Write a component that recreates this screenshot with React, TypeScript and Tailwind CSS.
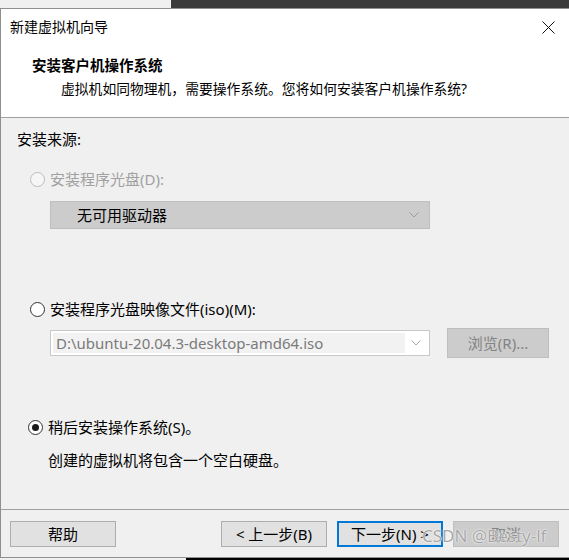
import React from 'react';

const font = "font-['Noto_Sans','Noto_Sans_CJK_SC',sans-serif]";

function Radio({ checked, disabled }: { checked?: boolean; disabled?: boolean }) {
  return (
    <span
      className={`flex h-[15px] w-[15px] shrink-0 items-center justify-center rounded-full border ${
        disabled ? 'border-[#bcbcbc] bg-[#f6f6f6]' : 'border-[#333333] bg-white'
      }`}
    >
      {checked && <span className="h-[7px] w-[7px] rounded-full bg-[#1a1a1a]" />}
    </span>
  );
}

function Chevron({ color = '#9a9a9a' }: { color?: string }) {
  return (
    <svg width="10" height="6" viewBox="0 0 10 6" fill="none">
      <path d="M0.5 0.5L5 5L9.5 0.5" stroke={color} strokeWidth="1" />
    </svg>
  );
}

function Button({
  children,
  focused,
  disabled,
  className = '',
}: {
  children: React.ReactNode;
  focused?: boolean;
  disabled?: boolean;
  className?: string;
}) {
  const look = focused
    ? 'border-2 border-[#0078d7] bg-[#e1e1e1] text-black'
    : disabled
    ? 'border border-[#bfbfbf] bg-[#cccccc] text-[#838383]'
    : 'border border-[#adadad] bg-[#e1e1e1] text-black';
  return (
    <div className={`flex h-[26px] items-center justify-center text-[15px] ${look} ${className}`}>
      {children}
    </div>
  );
}

export default function App() {
  return (
    <div className={`h-[560px] w-[569px] overflow-hidden bg-[#f0f0f0] ${font}`}>
      {/* window behind */}
      <div className="flex h-[8px]">
        <div className="w-[171px] bg-[#f0f0f0]" />
        <div className="flex-1 bg-[#3a3a3a]" />
      </div>

      <div className="border-l border-t border-[#8f8f8f]">
        {/* title bar */}
        <div className="flex h-[36px] items-center justify-between bg-white pl-[9px] pr-[14px]">
          <span className="text-[14px] leading-5 text-black">新建虚拟机向导</span>
          <svg width="13" height="13" viewBox="0 0 13 13">
            <path d="M0.5 0.5L12.5 12.5M12.5 0.5L0.5 12.5" stroke="#111" strokeWidth="1" />
          </svg>
        </div>

        {/* header */}
        <div className="h-[73px] border-b border-[#a0a0a0] bg-white pl-[31px] pt-[10px]">
          <div className="text-[14.5px] font-bold leading-5 text-black">安装客户机操作系统</div>
          <div className="mt-[4px] pl-[29px] text-[13.8px] leading-5 text-black">
            虚拟机如同物理机，需要操作系统。您将如何安装客户机操作系统?
          </div>
        </div>

        {/* body */}
        <div className="h-[392px] border-b border-[#a0a0a0] pl-[16px] pt-[11px] text-[15px] leading-5">
          <div className="text-black">安装来源:</div>

          <div className="mt-[20px] flex items-center gap-[5px] pl-[13px] text-[#a0a0a0]">
            <Radio disabled />
            <span>安装程序光盘(D):</span>
          </div>

          <div className="ml-[33px] mt-[12px] flex h-[28px] w-[380px] items-center justify-between border border-[#bfbfbf] bg-[#cccccc] pl-[26px] pr-[10px] text-black">
            <span>无可用驱动器</span>
            <Chevron color="#9a9a9a" />
          </div>

          <div className="mt-[70px] flex items-center gap-[5px] pl-[13px] text-black">
            <Radio />
            <span>安装程序光盘映像文件(iso)(M):</span>
          </div>

          <div className="mt-[9px] flex h-[30px] items-center pl-[33px]">
            <div className="flex h-[26px] w-[380px] border border-[#c8c8c8] bg-white p-[2px]">
              <div className="flex flex-1 items-center bg-[#f2f2f2] pl-[3px] text-[#7a7a7a]">
                D:\ubuntu-20.04.3-desktop-amd64.iso
              </div>
              <div className="flex w-[22px] items-center justify-center">
                <Chevron color="#a8a8a8" />
              </div>
            </div>
            <Button disabled className="ml-[17px] h-[30px] w-[102px]">
              浏览(R)...
            </Button>
          </div>

          <div className="mt-[59px] flex items-center gap-[5px] pl-[11px] text-black">
            <Radio checked />
            <span>稍后安装操作系统(S)。</span>
          </div>

          <div className="mt-[13px] pl-[31px] text-black">创建的虚拟机将包含一个空白硬盘。</div>
        </div>

        {/* footer */}
        <div className="relative flex h-[48px] items-start justify-between border-b border-[#8f8f8f] pl-[9px] pr-[10px] pt-[11px]">
          <Button className="w-[106px]">帮助</Button>
          <div className="flex gap-[10px]">
            <Button className="w-[106px]">&lt; 上一步(B)</Button>
            <Button focused className="w-[106px]">下一步(N) &gt;</Button>
            <Button disabled className="w-[106px]">取消</Button>
          </div>
          <span className="pointer-events-none absolute left-[421px] top-[14px] text-[17px] leading-6 text-[#a6a6a6] [text-shadow:0_0_2px_#ffffff,0_0_1px_#ffffff]">
            CSDN @Besty-lf
          </span>
        </div>
      </div>

      <div className="flex h-[2px]">
        <div className="w-[186px] bg-[#f0f0f0]" />
        <div className="flex-1 bg-black" />
      </div>
    </div>
  );
}
